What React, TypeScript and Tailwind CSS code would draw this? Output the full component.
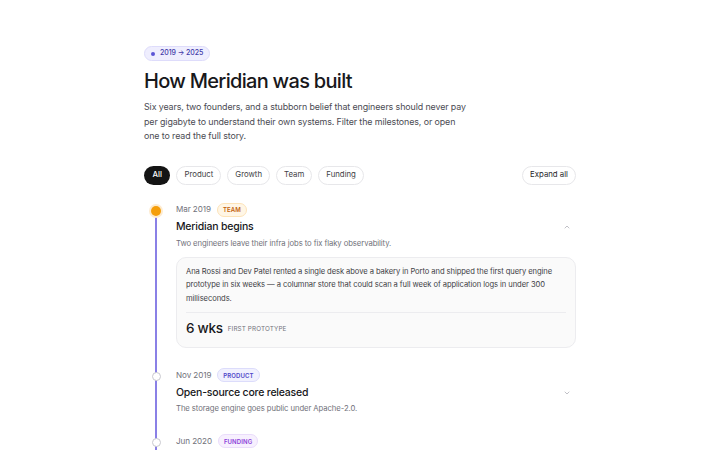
import { ChevronDown, ChevronUp } from "lucide-react"

type Milestone = {
  date: string
  tag: string
  tagClass: string
  title: string
  summary: string
  open?: boolean
  active?: boolean
}

const milestones: Milestone[] = [
  {
    date: "Mar 2019",
    tag: "Team",
    tagClass: "border-[#fde3b8] bg-[#fff6e6] text-[#c2620c]",
    title: "Meridian begins",
    summary: "Two engineers leave their infra jobs to fix flaky observability.",
    open: true,
    active: true,
  },
  {
    date: "Nov 2019",
    tag: "Product",
    tagClass: "border-[#dcdcfb] bg-[#f1f1fe] text-[#4f46c8]",
    title: "Open-source core released",
    summary: "The storage engine goes public under Apache-2.0.",
  },
  {
    date: "Jun 2020",
    tag: "Funding",
    tagClass: "border-[#eadcfb] bg-[#f7f0fe] text-[#8b3fd9]",
    title: "Seed round closed",
    summary: "A small seed round to hire the first five engineers.",
  },
]

const filters = ["All", "Product", "Growth", "Team", "Funding"]

export default function App() {
  return (
    <div className="h-[450px] overflow-hidden bg-white font-['Inter',sans-serif] text-[#18181b]">
      <div className="mx-auto w-[432px] pt-[46px]">
        <div className="flex">
          <span className="flex h-[15px] items-center gap-[5px] rounded-full border border-[#dedcfb] bg-[#efeefe] px-[6px] text-[7px] font-medium tracking-[-0.01em] text-[#3f3aa8]">
            <span className="h-[4px] w-[4px] rounded-full bg-[#5b54d6]" />
            2019 → 2025
          </span>
        </div>

        <h1 className="mt-[8px] text-[20px] font-medium leading-[24px] tracking-[-0.035em]">
          How Meridian was built
        </h1>
        <p className="mt-[7px] w-[324px] text-[8.9px] leading-[14.5px] tracking-[-0.012em] text-[#4b4b53]">
          Six years, two founders, and a stubborn belief that engineers should never pay
          per gigabyte to understand their own systems. Filter the milestones, or open
          one to read the full story.
        </p>

        <div className="mt-[22px] flex items-center justify-between">
          <div className="flex gap-[6px]">
            {filters.map((f, i) => (
              <button
                key={f}
                className={
                  i === 0
                    ? "h-[19px] rounded-full bg-[#141414] px-[8.5px] text-[7.8px] font-medium text-white"
                    : "h-[19px] rounded-full border border-[#e7e7ea] bg-white px-[7px] text-[7.8px] text-[#3f3f46]"
                }
              >
                {f}
              </button>
            ))}
          </div>
          <button className="h-[19px] rounded-full border border-[#e7e7ea] bg-white px-[7px] text-[7.8px] text-[#27272a]">
            Expand all
          </button>
        </div>

        <div className="relative mt-[18px]">
          {/* rail */}
          <div className="absolute bottom-0 left-[11.25px] top-[7px] w-[1.5px] bg-[#8a80e6]" />

          <div className="flex flex-col gap-[20px]">
            {milestones.map((m) => (
              <div key={m.title} className="relative flex">
                <div className="relative w-[32px] shrink-0">
                  {m.active ? (
                    <span className="absolute left-[5px] top-[1px] h-[14px] w-[14px] rounded-full bg-[#fdebd0] p-[2px]">
                      <span className="block h-full w-full rounded-full bg-[#f59e0b]" />
                    </span>
                  ) : (
                    <span className="absolute left-[7.5px] top-[3.5px] h-[9px] w-[9px] rounded-full border border-[#c9c9cf] bg-white" />
                  )}
                </div>
                <div className="flex-1">
                  <div className="flex h-[14px] items-center gap-[6px]">
                    <span className="text-[8.1px] tracking-[-0.01em] text-[#71717a]">{m.date}</span>
                    <span
                      className={`inline-flex h-[14px] items-center rounded-full border px-[5px] text-[6px] font-semibold uppercase tracking-[0.02em] ${m.tagClass}`}
                    >
                      {m.tag}
                    </span>
                  </div>
                  <div className="mt-[2.5px] flex items-center justify-between">
                    <h3 className="text-[10.5px] font-medium leading-[16px] tracking-[-0.02em]">{m.title}</h3>
                    {m.open ? (
                      <ChevronUp className="mr-[5px] h-[8px] w-[8px] text-[#a1a1aa]" strokeWidth={2} />
                    ) : (
                      <ChevronDown className="mr-[5px] h-[8px] w-[8px] text-[#a1a1aa]" strokeWidth={2} />
                    )}
                  </div>
                  <p className="mt-[2.5px] text-[7.7px] leading-[11px] tracking-[-0.01em] text-[#71717a]">
                    {m.summary}
                  </p>

                  {m.open && (
                    <div className="mt-[8px] rounded-[10px] border border-[#ececef] bg-[#fafafa] px-[9px] pb-[10px] pt-[7px]">
                      <p className="text-[7.6px] leading-[13.5px] tracking-[-0.01em] text-[#3f3f46]">
                        Ana Rossi and Dev Patel rented a single desk above a bakery in Porto and shipped the first
                        query engine prototype in six weeks — a columnar store that could scan a full week of
                        application logs in under 300 milliseconds.
                      </p>
                      <div className="mt-[7px] flex h-[25px] items-end gap-[5px] border-t border-[#ececef] pt-[7px]">
                        <span className="text-[13.5px] font-medium leading-[18px] tracking-[-0.02em] text-[#18181b]">
                          6 wks
                        </span>
                        <span className="pb-[3px] text-[6.3px] uppercase leading-[10px] tracking-[0.02em] text-[#71717a]">
                          First prototype
                        </span>
                      </div>
                    </div>
                  )}
                </div>
              </div>
            ))}
          </div>
        </div>
      </div>
    </div>
  )
}
